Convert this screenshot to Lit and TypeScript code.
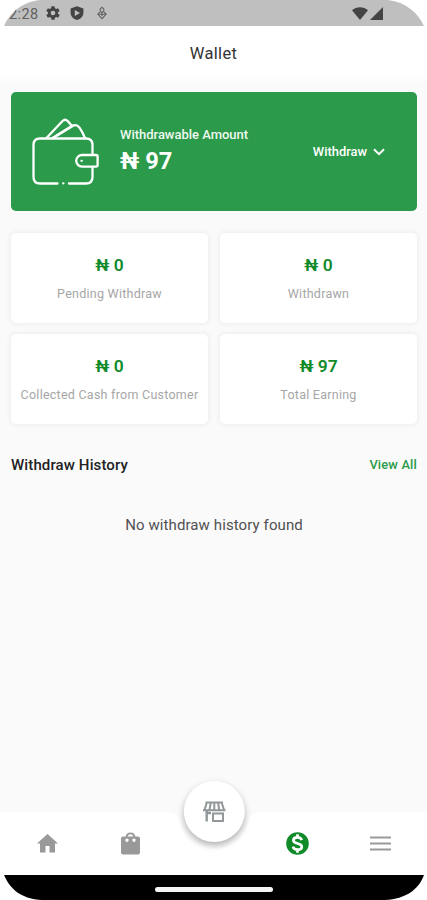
import { LitElement, html, css, svg } from "lit";
import { customElement, property } from "lit/decorators.js";

@customElement("stat-card")
class StatCard extends LitElement {
  @property() amount = "";
  @property() label = "";
  static styles = css`
    :host {
      display: flex;
      flex-direction: column;
      align-items: center;
      box-sizing: border-box;
      height: 90px;
      padding-top: 21px;
      background: #fff;
      border-radius: 5px;
      box-shadow: 0 0 4px 1px #ededed;
      white-space: nowrap;
    }
    .amount {
      font-size: 17.4px;
      line-height: 22px;
      font-weight: 600;
      color: #118a2a;
    }
    .label {
      margin-top: 9px;
      font-size: 12.5px;
      line-height: 18px;
      letter-spacing: 0.25px;
      color: #a6a6a6;
    }
  `;
  render() {
    return html`<div class="amount">${this.amount}</div>
      <div class="label">${this.label}</div>`;
  }
}

const gear = svg`<path fill-rule="evenodd" d="M19.4 13a7.500 7.500 0 0 0 0-2l2.100-1.600-2-3.500-2.500 1a7.300 7.300 0 0 0-1.700-1L15 3.300h-4l-.4 2.600a7.300 7.300 0 0 0-1.700 1l-2.500-1-2 3.500L6.600 11a7.500 7.500 0 0 0 0 2l-2.200 1.600 2 3.500 2.500-1q.8.600 1.700 1l.4 2.600h4l.4-2.600q.9-.4 1.700-1l2.500 1 2-3.500ZM13 15a3 3 0 1 1 0-6 3 3 0 0 1 0 6Z"/>`;

@customElement("app-root")
class AppRoot extends LitElement {
  static styles = css`
    :host {
      display: flex;
      flex-direction: column;
      width: 427px;
      height: 900px;
      overflow: hidden;
      background: #fff;
      font-family: Roboto, "Liberation Sans", sans-serif;
      white-space: nowrap;
    }
    svg {
      display: block;
      flex: none;
      overflow: visible;
    }
    .status {
      display: flex;
      align-items: center;
      height: 26px;
      box-sizing: border-box;
      padding: 0 44px 0 9px;
      background: #bfbfbf;
      clip-path: path("M4 26C9 14 21 2 40 0H388C406 2 418 13 424 26Z");
      color: #444;
      fill: #444;
    }
    .clock {
      width: 37px;
      font-size: 14.500px;
      line-height: 26px;
      padding-top: 3px;
      letter-spacing: 0.4px;
      color: #606060;
    }
    .shield {
      margin-left: 10px;
    }
    .debug {
      margin-left: 13px;
    }
    .wifi {
      margin-left: auto;
      margin-right: 2px;
    }
    .title {
      height: 57px;
      line-height: 56px;
      text-align: center;
      font-size: 16.500px;
      letter-spacing: 0.35px;
      color: #333;
      background: linear-gradient(#fff 88%, #fbfafa);
    }
    .body {
      flex: 1;
      box-sizing: border-box;
      padding: 9px 10px 0 11px;
      background: #fafafa;
    }
    .hero {
      display: flex;
      height: 119px;
      box-sizing: border-box;
      padding: 0 32px 0 20px;
      background: #2b9a4a;
      border-radius: 5px;
      color: #fff;
    }
    .purse {
      margin-top: 26px;
    }
    .sum {
      margin: 34px 0 0 21px;
      flex: 1;
    }
    .caption {
      font-size: 13px;
      line-height: 18px;
      font-weight: 500;
      letter-spacing: -0.02px;
      color: #eef8f0;
    }
    .balance {
      font-size: 23.700px;
      line-height: 28px;
      margin-top: 3px;
      font-weight: 700;
    }
    .pick {
      display: flex;
      align-items: center;
      gap: 6px;
      font-size: 12.900px;
      font-weight: 500;
    }
    .grid {
      display: grid;
      grid-template-columns: 197px 197px;
      justify-content: space-between;
      row-gap: 11px;
      margin-top: 22px;
    }
    .history {
      display: flex;
      justify-content: space-between;
      align-items: center;
      margin-top: 30px;
      line-height: 22px;
      font-weight: 500;
    }
    .heading {
      font-size: 15px;
      letter-spacing: 0.12px;
      color: #222;
    }
    .all {
      font-size: 12.900px;
      letter-spacing: 0.15px;
      color: #2b9a4a;
    }
    .empty {
      margin-top: 38px;
      text-align: center;
      font-size: 15px;
      line-height: 22px;
      letter-spacing: 0.1px;
      color: #505050;
    }
    .nav {
      position: relative;
      display: grid;
      grid-template-columns: repeat(5, 83.300px);
      justify-content: center;
      justify-items: center;
      align-items: center;
      height: 63px;
      padding-left: 1px;
      box-sizing: border-box;
      background: #fff;
      fill: #999;
    }
    .fab {
      position: absolute;
      left: 167px;
      top: -36px;
    }
    .disc {
      filter: drop-shadow(0 3px 3px rgba(0, 0, 0, 0.3));
    }
    .gesture {
      display: flex;
      justify-content: center;
      align-items: center;
      height: 25px;
      padding: 4px 0 0 1px;
      box-sizing: border-box;
      background: #000;
      clip-path: path("M4 0C10 14 21 24 42 25H385C406 24 419 14 424 0Z");
    }
    .pill {
      width: 118px;
      height: 5px;
      border-radius: 3px;
      background: #f5f5f5;
    }
  `;

  stats = [
    ["₦ 0", "Pending Withdraw"],
    ["₦ 0", "Withdrawn"],
    ["₦ 0", "Collected Cash from Customer"],
    ["₦ 97", "Total Earning"],
  ];

  render() {
    return html`
      <div class="status">
        <span class="clock">2:28</span>
        <svg width="14" height="14" viewBox="4 3 18 18">${gear}</svg>
        <svg class="shield" width="14" height="14" viewBox="0 0 14 14">
          <path fill-rule="evenodd" d="M7 .2 13.400 2.500V7c0 3.200-2.700 5.900-6.400 7C3.300 12.900.6 10.200.6 7V2.500ZM4.800 4v6L10 7Z" />
        </svg>
        <svg class="debug" width="10" height="14" viewBox="0 0 10 14" fill="none" stroke="#626262" stroke-width="1.100">
          <path d="M3.200 5V3L5 1.200 6.800 3V5L5 6.700ZM1.200 7.500 3 6.200M8.800 7.500 7 6.200M1 8.300H9L5 12.600ZM5 6.500V10" />
        </svg>
        <svg class="wifi" width="16" height="13" viewBox="0 0 16 13">
          <path d="M0 3.300C4.500-.7 11.500-.7 16 3.300L8 13Z" />
        </svg>
        <svg width="13" height="13" viewBox="0 0 13 13"><path d="M13 0V13H0Z" /></svg>
      </div>
      <div class="title">Wallet</div>
      <div class="body">
        <div class="hero">
          <svg class="purse" width="68" height="68" viewBox="0 0 68 68" fill="none" stroke="#fff" stroke-width="2.300" stroke-linecap="round" stroke-linejoin="round">
            <path d="M61.500 36V27q0-6.500-6.500-6.500H9q-6.500 0-6.500 6.500V59q0 6.500 6.500 6.500H26.500M38 65.500H55q6.500 0 6.500-6.500V49" />
            <path d="M15.500 20 31.500 3q2.600-2.600 5.200 0L41 8" />
            <path d="M21.500 20 L40 8.500q5.500-3.200 8.500 1.200Q52 15 54 20" />
            <path d="M22 20 42.500 7.500" />
            <path d="M51 37H65q1.600 0 1.600 1.600V47q0 1.600-1.600 1.600H51a5.800 5.800 0 0 1 0-11.600Z" />
            <path d="M50.500 42.800h.2M32.200 65.300h.2" />
          </svg>
          <div class="sum">
            <div class="caption">Withdrawable Amount</div>
            <div class="balance">₦ 97</div>
          </div>
          <div class="pick">
            Withdraw
            <svg width="12" height="8" viewBox="0 0 12 8" fill="none" stroke="#fff" stroke-width="2"><path d="M1 1.200 6 6.200 11 1.200" /></svg>
          </div>
        </div>
        <div class="grid">
          ${this.stats.map(([a, l]) => html`<stat-card .amount=${a} .label=${l}></stat-card>`)}
        </div>
        <div class="history">
          <span class="heading">Withdraw History</span>
          <span class="all">View All</span>
        </div>
        <div class="empty">No withdraw history found</div>
      </div>
      <div class="nav">
        <svg width="21" height="19" viewBox="0 0 21 19"><path d="M10.500 0 21 9.500H18V18.500H12.500V12H8.500V18.500H3V9.500H0Z" /></svg>
        <svg width="19" height="23" viewBox="0 0 19 23">
          <path fill-rule="evenodd" d="M2 4.500H4.600a5 5 0 0 1 9.800 0H17q2 0 2 2V20.500q0 2-2 2H2q-2 0-2-2V6.500q0-2 2-2ZM6.700 4.500h5.600a2.900 2.900 0 0 0-5.600 0ZM6 6.500a1.700 1.700 0 1 0 .01 0ZM13 6.500a1.700 1.700 0 1 0 .01 0Z" />
        </svg>
        <span></span>
        <svg width="23" height="23" viewBox="0 0 23 23">
          <circle cx="11.500" cy="11.500" r="11.300" fill="#118a2a" />
          <path d="M15.800 8.200C15.200 6.200 13.700 5.300 11.500 5.300 9 5.300 7.400 6.500 7.400 8.200c0 4.300 8.400 2.300 8.400 6.500 0 1.900-1.700 3-4.300 3-2.400 0-4-1-4.500-3M11.500 2.300v3M11.500 17.700v3" fill="none" stroke="#fff" stroke-width="2.700" />
        </svg>
        <svg width="21" height="15" viewBox="0 0 21 15"><path d="M0 .5H21v2H0ZM0 6.500H21v2H0ZM0 12.500H21v2H0Z" /></svg>
        <svg class="fab" width="94" height="78" viewBox="0 0 94 78">
          <path d="M0 36Q9 36 12 43A35 35 0 0 0 20 56H74A35 35 0 0 0 82 43Q85 36 94 36V35.500H0Z" fill="#fafafa" />
          <path d="M12.500 44A35 35 0 0 0 81.500 44Z" fill="#fafafa" />
          <circle class="disc" cx="47.300" cy="35.500" r="30.500" fill="#fff" />
          <g fill="none" stroke="#929799" stroke-width="2">
            <path d="M38.500 26.500H56M40 26 37.500 34M54.500 26 57 34M36 34.300H58.500" />
            <path d="M43.800 26.500 42.500 34M47.300 26.500V34M51 26.500 52.300 34" />
            <path d="M39.700 35V45.500M39 37H44" stroke-width="2.400" />
            <path d="M46 37.500H56V45H46Z" />
          </g>
        </svg>
      </div>
      <div class="gesture"><div class="pill"></div></div>
    `;
  }
}
